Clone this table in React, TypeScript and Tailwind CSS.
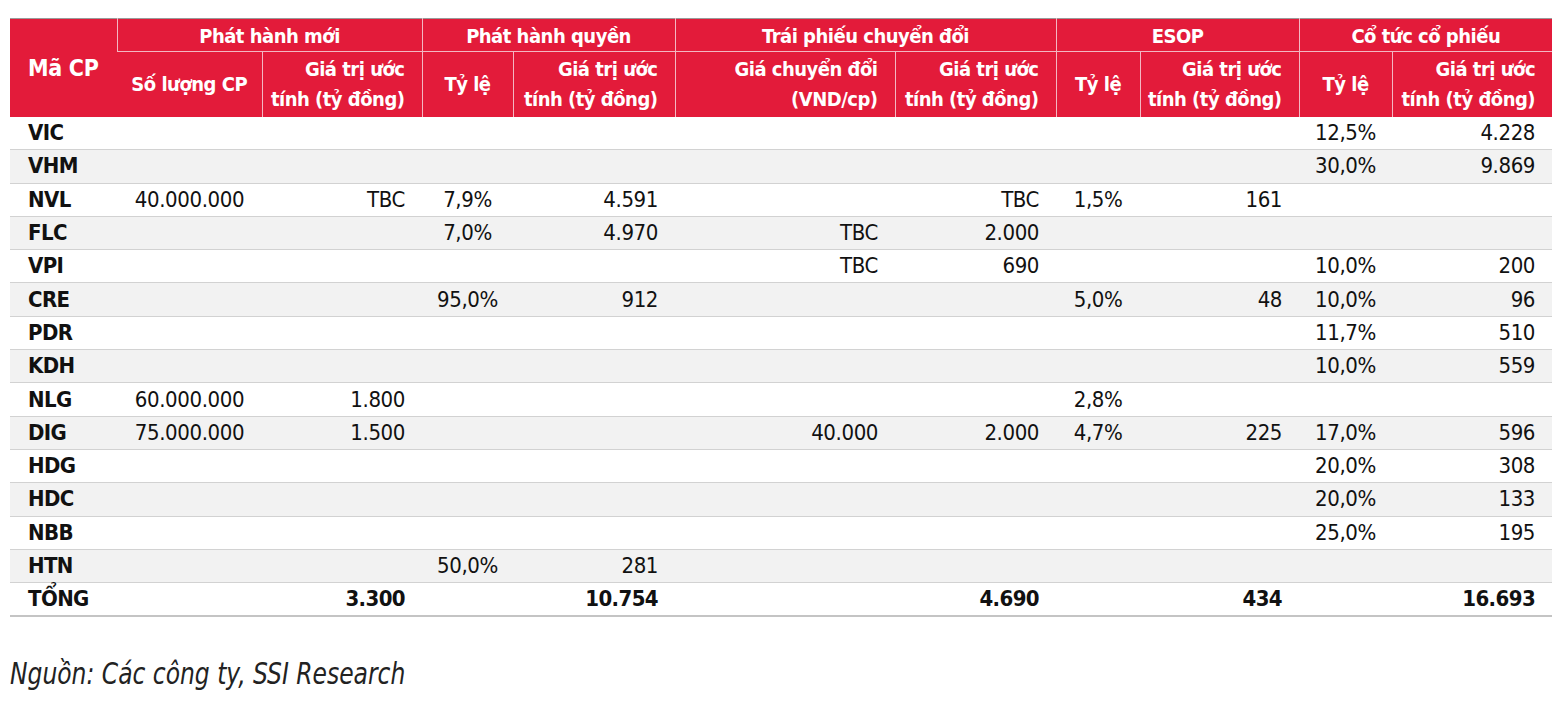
import React from "react";

const font = { fontFamily: "'DejaVu Sans Condensed', 'DejaVu Sans', sans-serif" };

type Row = { code: string; cells: string[] };

// columns after Mã CP: slm, gtm, tlq, gtq, gcd, gtcd, tle, gte, tlc, gtc
const rows: Row[] = [
  { code: "VIC", cells: ["", "", "", "", "", "", "", "", "12,5%", "4.228"] },
  { code: "VHM", cells: ["", "", "", "", "", "", "", "", "30,0%", "9.869"] },
  { code: "NVL", cells: ["40.000.000", "TBC", "7,9%", "4.591", "", "TBC", "1,5%", "161", "", ""] },
  { code: "FLC", cells: ["", "", "7,0%", "4.970", "TBC", "2.000", "", "", "", ""] },
  { code: "VPI", cells: ["", "", "", "", "TBC", "690", "", "", "10,0%", "200"] },
  { code: "CRE", cells: ["", "", "95,0%", "912", "", "", "5,0%", "48", "10,0%", "96"] },
  { code: "PDR", cells: ["", "", "", "", "", "", "", "", "11,7%", "510"] },
  { code: "KDH", cells: ["", "", "", "", "", "", "", "", "10,0%", "559"] },
  { code: "NLG", cells: ["60.000.000", "1.800", "", "", "", "", "2,8%", "", "", ""] },
  { code: "DIG", cells: ["75.000.000", "1.500", "", "", "40.000", "2.000", "4,7%", "225", "17,0%", "596"] },
  { code: "HDG", cells: ["", "", "", "", "", "", "", "", "20,0%", "308"] },
  { code: "HDC", cells: ["", "", "", "", "", "", "", "", "20,0%", "133"] },
  { code: "NBB", cells: ["", "", "", "", "", "", "", "", "25,0%", "195"] },
  { code: "HTN", cells: ["", "", "50,0%", "281", "", "", "", "", "", ""] },
];

const total = ["", "3.300", "", "10.754", "", "4.690", "", "434", "", "16.693"];

// alignment per data column
const align = ["text-center", "text-right pr-[17px]", "text-center", "text-right pr-[17px]", "text-right pr-[17px]", "text-right pr-[17px]", "text-center", "text-right pr-[17px]", "text-center", "text-right pr-[17px]"];

const groups = ["Phát hành mới", "Phát hành quyền", "Trái phiếu chuyển đổi", "ESOP", "Cổ tức cổ phiếu"];

const value = (
  <>
    Giá trị ước
    <br />
    tính (tỷ đồng)
  </>
);

const sub = "font-bold whitespace-nowrap border-l border-[#f3b7c2]";

export default function App() {
  return (
    <div className="w-[1557px] h-[705px] bg-white pt-[18px] px-[10px] text-[#111]" style={font}>
      <table className="table-fixed border-collapse w-[1542px] text-[22px] tracking-[-0.4px] leading-[30px]">
        <colgroup>
          <col className="w-[107px]" />
          <col className="w-[145px]" />
          <col className="w-[160px]" />
          <col className="w-[91px]" />
          <col className="w-[162px]" />
          <col className="w-[220px]" />
          <col className="w-[161px]" />
          <col className="w-[84px]" />
          <col className="w-[159px]" />
          <col className="w-[93px]" />
          <col className="w-[160px]" />
        </colgroup>
        <thead className="bg-[#e31b3a] text-white text-[20px] tracking-[-0.5px] border-t border-[#9a9a9a]">
          <tr className="h-[33px]">
            <th rowSpan={2} className="text-left pl-[18px] font-bold whitespace-nowrap text-[23px] tracking-[-0.3px]">Mã CP</th>
            {groups.map((g) => (
              <th key={g} colSpan={2} className="text-center font-bold whitespace-nowrap border-l border-b border-[#f3b7c2] pt-[2px]">
                {g}
              </th>
            ))}
          </tr>
          <tr className="h-[65px]">
            <th className="text-center font-bold whitespace-nowrap">Số lượng CP</th>
            <th className={`text-right pr-[17px] ${sub}`}>{value}</th>
            <th className={`text-center ${sub}`}>Tỷ lệ</th>
            <th className={`text-right pr-[17px] ${sub}`}>{value}</th>
            <th className={`text-right pr-[17px] ${sub}`}>
              Giá chuyển đổi
              <br />
              (VND/cp)
            </th>
            <th className={`text-right pr-[17px] ${sub}`}>{value}</th>
            <th className={`text-center ${sub}`}>Tỷ lệ</th>
            <th className={`text-right pr-[17px] ${sub}`}>{value}</th>
            <th className={`text-center ${sub}`}>Tỷ lệ</th>
            <th className={`text-right pr-[17px] ${sub}`}>{value}</th>
          </tr>
        </thead>
        <tbody>
          {rows.map((r, i) => (
            <tr key={r.code} className={`h-[33.3px] border-b border-[#d2d2d2] ${i % 2 === 1 ? "bg-[#f2f2f2]" : "bg-white"}`}>
              <td className="pl-[18px] font-bold tracking-[-0.6px]">{r.code}</td>
              {r.cells.map((c, j) => (
                <td key={j} className={align[j]}>
                  {c}
                </td>
              ))}
            </tr>
          ))}
          <tr className="h-[33.3px] border-b-2 border-[#c4c4c4] font-bold tracking-[-0.6px]">
            <td className="pl-[18px]">TỔNG</td>
            {total.map((c, j) => (
              <td key={j} className={align[j]}>
                {c}
              </td>
            ))}
          </tr>
        </tbody>
      </table>
      <p className="mt-[38px] leading-[36px] text-[31px] italic text-[#222]">
        <span className="inline-block origin-left scale-x-[0.84]">Nguồn: Các công ty, SSI Research</span>
      </p>
    </div>
  );
}
